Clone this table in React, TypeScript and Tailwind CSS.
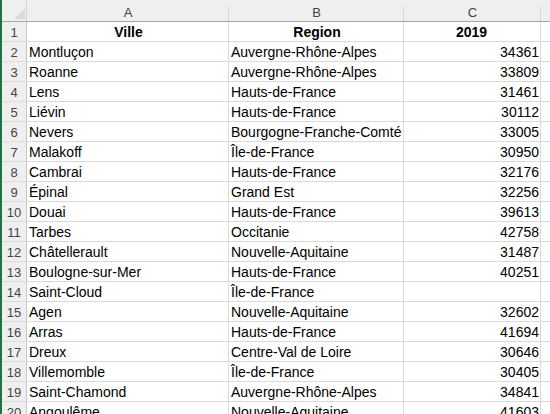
const rows: [string, string, string][] = [
  ['Montluçon', 'Auvergne-Rhône-Alpes', '34361'],
  ['Roanne', 'Auvergne-Rhône-Alpes', '33809'],
  ['Lens', 'Hauts-de-France', '31461'],
  ['Liévin', 'Hauts-de-France', '30112'],
  ['Nevers', 'Bourgogne-Franche-Comté', '33005'],
  ['Malakoff', 'Île-de-France', '30950'],
  ['Cambrai', 'Hauts-de-France', '32176'],
  ['Épinal', 'Grand Est', '32256'],
  ['Douai', 'Hauts-de-France', '39613'],
  ['Tarbes', 'Occitanie', '42758'],
  ['Châtellerault', 'Nouvelle-Aquitaine', '31487'],
  ['Boulogne-sur-Mer', 'Hauts-de-France', '40251'],
  ['Saint-Cloud', 'Île-de-France', ''],
  ['Agen', 'Nouvelle-Aquitaine', '32602'],
  ['Arras', 'Hauts-de-France', '41694'],
  ['Dreux', 'Centre-Val de Loire', '30646'],
  ['Villemomble', 'Île-de-France', '30405'],
  ['Saint-Chamond', 'Auvergne-Rhône-Alpes', '34841'],
  ['Angoulême', 'Nouvelle-Aquitaine', '41603'],
]

function ColHead({ label, className }: { label?: string; className: string }) {
  return (
    <div
      className={`relative flex justify-center pt-1 text-[13px] leading-[17px] text-[#444] after:absolute after:top-[7px] after:right-0 after:bottom-0 after:w-px after:bg-[#d4d4d4] ${className}`}
    >
      {label}
    </div>
  )
}

function Row({ n, cells, bold }: { n: number; cells: [string, string, string]; bold?: boolean }) {
  const cell = 'flex h-full items-center border-r border-r-[#dadada] pt-px leading-[19px] whitespace-nowrap overflow-hidden'
  return (
    <div className="flex h-5 shrink-0 text-[14px] text-black">
      <div className="flex w-[25px] shrink-0 items-center justify-center border-r border-b border-r-[#c8c8c8] border-b-[#dedede] bg-[#efefef] pt-px text-[13px] leading-[19px] text-[#444]">
        {n}
      </div>
      <div className="flex flex-1 border-b border-b-[#dadada]">
        <div className={`${cell} w-[202px] shrink-0 pl-[2px] ${bold ? 'justify-center font-bold' : ''}`}>
          {cells[0]}
        </div>
        <div className={`${cell} w-[175px] shrink-0 pl-[2px] ${bold ? 'justify-center font-bold' : ''}`}>
          {cells[1]}
        </div>
        <div className={`${cell} w-[137px] shrink-0 pr-px ${bold ? 'justify-center font-bold' : 'justify-end'}`}>
          {cells[2]}
        </div>
        <div className="flex-1" />
      </div>
    </div>
  )
}

export default function App() {
  return (
    <div
      className="flex h-[414px] w-[550px] flex-col overflow-hidden border-l-2 border-l-[#217346] bg-white"
      style={{ fontFamily: '"Liberation Sans", Arial, sans-serif' }}
    >
      <div className="flex h-[22px] shrink-0 border-b border-b-[#a6a6a6] bg-[#efefef]">
        <div className="flex w-[25px] shrink-0 items-end justify-end border-r border-r-[#d4d4d4] pr-[1px] pb-[2px]">
          <svg width="11" height="11" viewBox="0 0 11 11">
            <polygon points="11,0 11,11 0,11" fill="#dcdcdc" />
          </svg>
        </div>
        <ColHead label="A" className="w-[202px] shrink-0" />
        <ColHead label="B" className="w-[175px] shrink-0" />
        <ColHead label="C" className="w-[137px] shrink-0" />
        <div className="flex-1" />
      </div>
      <Row n={1} cells={['Ville', 'Region', '2019']} bold />
      {rows.map((r, i) => (
        <Row key={i} n={i + 2} cells={r} />
      ))}
    </div>
  )
}
